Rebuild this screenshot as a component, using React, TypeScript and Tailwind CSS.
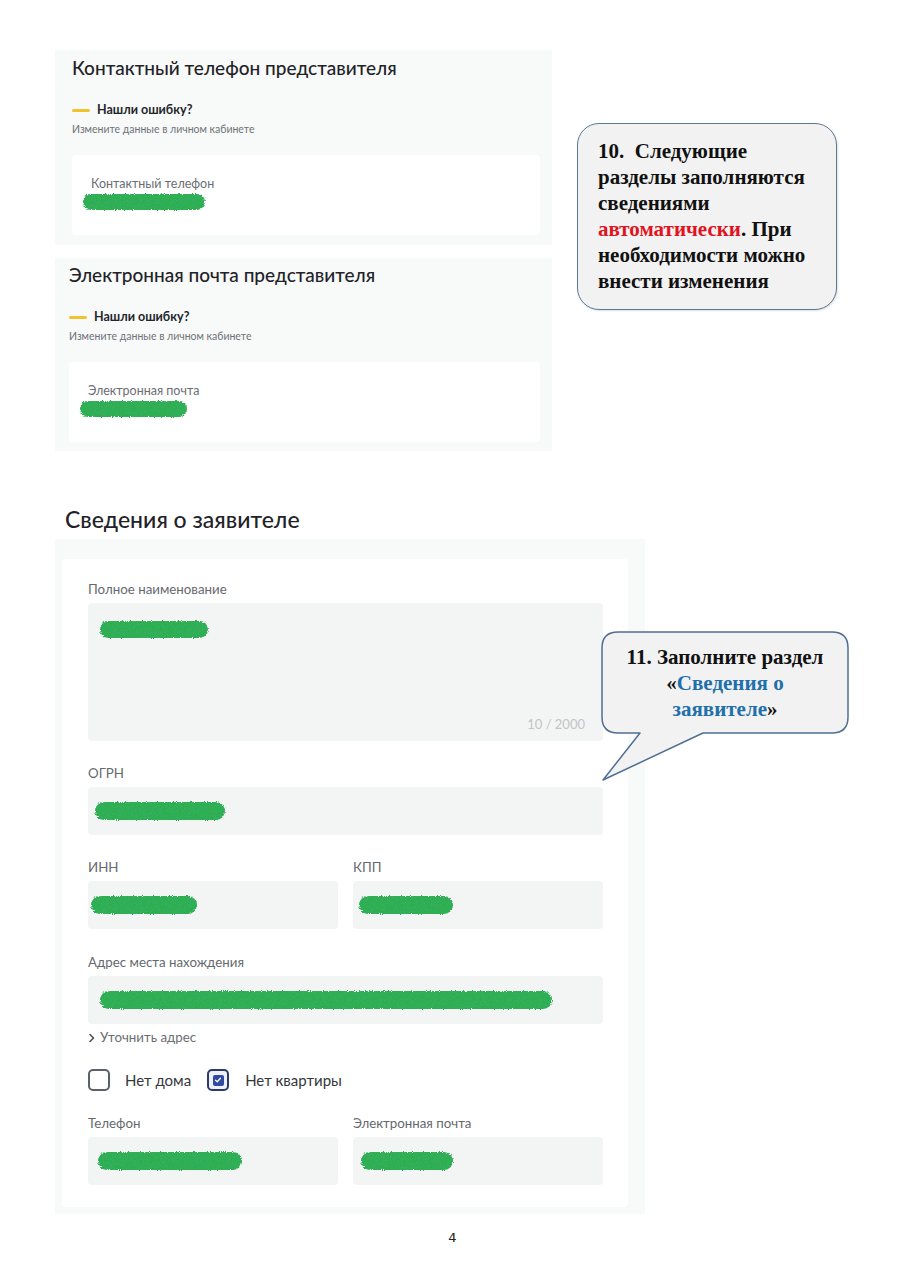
import React from "react";

const ui = "font-['Lato','Noto_Sans',sans-serif]";
const serif = "font-['Liberation_Serif','Times_New_Roman',serif]";

function Scribble({ w, h = 15, className = "" }: { w: number; h?: number; className?: string }) {
  return (
    <svg width={w} height={h + 4} className={`block ${className}`} viewBox={`0 0 ${w} ${h + 4}`}>
      <rect x={3} y={2} width={w - 6} height={h} rx={h / 2} fill="#2fae4e" filter="url(#rough)" />
    </svg>
  );
}

function Dash() {
  return <span className="inline-block w-[18px] h-[3px] rounded-full bg-[#f2c230]" />;
}

function RepPanel({
  title,
  label,
  scribble,
  px,
}: {
  title: string;
  label: string;
  scribble: number;
  px: string;
}) {
  return (
    <div className={`bg-[#f8f9f9] ${px} pr-[12px]`}>
      <div className="text-[19px] leading-[24px] font-medium text-[#1f2328]">{title}</div>
      <div className="mt-[22px] flex items-center gap-[7px] h-[16px]">
        <Dash />
        <span className="text-[12.5px] leading-[16px] font-bold text-[#22262b]">Нашли ошибку?</span>
      </div>
      <div className="mt-[4px] text-[10.5px] leading-[14px] text-[#6f7378]">Измените данные в личном кабинете</div>
      <div className="mt-[19px] h-[80px] bg-white rounded-[4px] pl-[19px] pt-[21px]">
        <div className="text-[12.5px] leading-[16px] text-[#6a6e73]">{label}</div>
        <div className="-ml-[11px] mt-[0px]">
          <Scribble w={scribble} h={16} />
        </div>
      </div>
    </div>
  );
}

function Label({ children }: { children: React.ReactNode }) {
  return <div className="text-[13.3px] leading-[18px] text-[#65696e]">{children}</div>;
}

function Field({ scribble, pl = 9 }: { scribble: number; pl?: number }) {
  return (
    <div className="h-[48px] bg-[#f3f4f4] rounded-[4px] flex items-center" style={{ paddingLeft: pl }}>
      <Scribble w={scribble} h={18} />
    </div>
  );
}

export default function App() {
  return (
    <div className={`relative w-[905px] h-[1280px] bg-white overflow-hidden ${ui}`}>
      <svg width="0" height="0" className="absolute">
        <defs>
          <filter id="rough" x="-10%" y="-40%" width="120%" height="180%">
            <feTurbulence type="fractalNoise" baseFrequency="0.9" numOctaves="2" seed="3" result="noise" />
            <feDisplacementMap in="SourceGraphic" in2="noise" scale="3.5" xChannelSelector="R" yChannelSelector="G" result="disp" />
            <feTurbulence type="fractalNoise" baseFrequency="1.6" numOctaves="1" seed="7" result="grain" />
            <feColorMatrix in="grain" type="matrix" values="0 0 0 0 0.05  0 0 0 0 0.45  0 0 0 0 0.2  0 0 0 1.2 -0.45" result="dots" />
            <feComposite in="dots" in2="disp" operator="in" result="dotsIn" />
            <feMerge>
              <feMergeNode in="disp" />
              <feMergeNode in="dotsIn" />
            </feMerge>
          </filter>
        </defs>
      </svg>

      <div className="pt-[50px]">
        {/* Top section */}
        <div className="flex">
          <div className="ml-[55px] w-[497px] flex flex-col">
            <div className="pt-[6px] pb-[10px] bg-[#f8f9f9]">
              <RepPanel
                title="Контактный телефон представителя"
                label="Контактный телефон"
                scribble={128}
                px="pl-[17px]"
              />
            </div>
            <div className="mt-[13px] pt-[5px] pb-[9px] bg-[#f8f9f9]">
              <RepPanel
                title="Электронная почта представителя"
                label="Электронная почта"
                scribble={113}
                px="pl-[14px]"
              />
            </div>
          </div>

          <div
            className={`ml-[25px] mt-[73px] w-[260px] h-[187px] rounded-[22px] border-[1.5px] border-[#5b7896] bg-[#f2f2f2] pl-[20px] pt-[14px] shadow-[1px_1px_2px_rgba(0,0,0,0.12)] ${serif} text-[21px] leading-[26px] font-bold text-[#111]`}
          >
            10.&nbsp; Следующие
            <br />
            разделы заполняются
            <br />
            сведениями
            <br />
            <span className="text-[#e0141e]">автоматически</span>. При
            <br />
            необходимости можно
            <br />
            внести изменения
          </div>
        </div>

        {/* Applicant section */}
        <div className="mt-[53px] ml-[65px] text-[23px] leading-[30px] font-medium text-[#1f2328]">
          Сведения о заявителе
        </div>
        <div className="mt-[5px] ml-[55px] w-[590px] bg-[#f8f9f9] pt-[20px] pb-[7px] pl-[7px] pr-[17px]">
          <div className="bg-white rounded-[4px] pl-[26px] pr-[25px] pt-[21px] pb-[22px]">
            <Label>Полное наименование</Label>
            <div className="mt-[5px] h-[138px] bg-[#f3f4f4] rounded-[4px] relative pl-[9px] pt-[16px]">
              <Scribble w={114} h={17} />
              <div className="absolute right-[18px] bottom-[9px] text-[13px] leading-[16px] text-[#c3c5c7]">
                10 / 2000
              </div>
            </div>

            <div className="mt-[23px]">
              <Label>ОГРН</Label>
            </div>
            <div className="mt-[5px]">
              <Field scribble={136} pl={4} />
            </div>

            <div className="mt-[23px] grid grid-cols-2 gap-x-[15px]">
              <div>
                <Label>ИНН</Label>
                <div className="mt-[5px]">
                  <Field scribble={112} pl={0} />
                </div>
              </div>
              <div>
                <Label>КПП</Label>
                <div className="mt-[5px]">
                  <Field scribble={100} pl={3} />
                </div>
              </div>
            </div>

            <div className="mt-[24px]">
              <Label>Адрес места нахождения</Label>
            </div>
            <div className="mt-[5px]">
              <Field scribble={458} pl={9} />
            </div>

            <div className="mt-[5px] flex items-center gap-[4px] text-[13.3px] leading-[17px] text-[#6a6e73]">
              <svg width="8" height="10" viewBox="0 0 8 10" className="block">
                <path d="M2 1.5 L5.5 5 L2 8.5" fill="none" stroke="#4d5156" strokeWidth="1.6" strokeLinecap="round" strokeLinejoin="round" />
              </svg>
              <span>Уточнить адрес</span>
            </div>

            <div className="mt-[23px] flex items-center h-[22px] text-[15px] leading-[20px] text-[#34373c]">
              <span className="w-[22px] h-[22px] rounded-[5px] border-2 border-[#5b6168] bg-white" />
              <span className="ml-[15px]">Нет дома</span>
              <span className="ml-[16px] w-[22px] h-[22px] rounded-[5px] border-2 border-[#2b3a66] bg-[#eef1fa] flex items-center justify-center">
                <span className="w-[11px] h-[11px] rounded-[2px] bg-[#2f4a9e] flex items-center justify-center">
                  <svg width="8" height="8" viewBox="0 0 8 8" className="block">
                    <path d="M1.5 4.2 L3.2 5.8 L6.5 2.3" fill="none" stroke="white" strokeWidth="1.3" strokeLinecap="round" strokeLinejoin="round" />
                  </svg>
                </span>
              </span>
              <span className="ml-[16px]">Нет квартиры</span>
            </div>

            <div className="mt-[23px] grid grid-cols-2 gap-x-[15px]">
              <div>
                <Label>Телефон</Label>
                <div className="mt-[5px]">
                  <Field scribble={150} pl={7} />
                </div>
              </div>
              <div>
                <Label>Электронная почта</Label>
                <div className="mt-[5px]">
                  <Field scribble={98} pl={5} />
                </div>
              </div>
            </div>
          </div>
        </div>

        <div className="mt-[15px] text-center text-[13px] leading-[18px] text-[#222] font-['DejaVu_Sans',sans-serif]">4</div>
      </div>

      {/* Callout 11 overlay */}
      <div className="absolute left-[598px] top-[630px] w-[255px] h-[155px]">
        <svg width="255" height="155" viewBox="0 0 255 155" className="absolute inset-0">
          <path
            d="M20 2 H234 Q250 2 250 18 V87 Q250 103 234 103 H105 L5 150 L42 103 H20 Q4 103 4 87 V18 Q4 2 20 2 Z"
            fill="#f2f2f2"
            stroke="#4f6f93"
            strokeWidth="1.5"
            strokeLinejoin="round"
          />
        </svg>
        <div
          className={`relative w-[246px] ml-[4px] pt-[14px] text-center ${serif} text-[21px] leading-[26px] font-bold text-[#111]`}
        >
          11. Заполните раздел
          <br />
          «<span className="text-[#1f6fab]">Сведения о</span>
          <br />
          <span className="text-[#1f6fab]">заявителе</span>»
        </div>
      </div>
    </div>
  );
}
